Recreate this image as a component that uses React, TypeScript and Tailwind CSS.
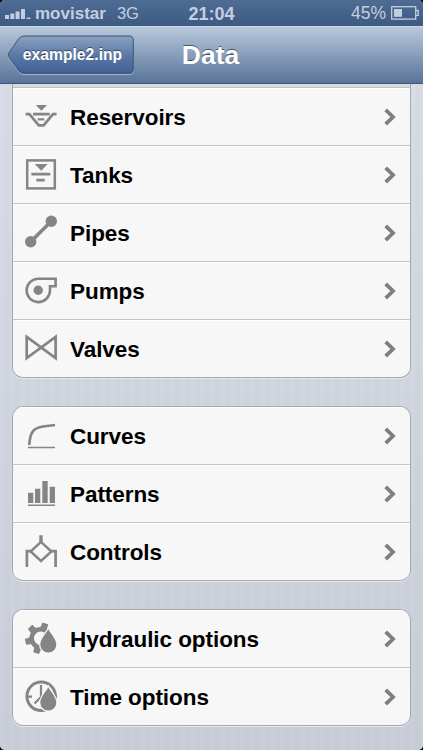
import type { ReactNode } from "react";

type Item = { label: string; icon: ReactNode };

const Icon = ({ children }: { children: ReactNode }) => (
  <svg
    width="32"
    height="32"
    viewBox="0 0 32 32"
    fill="none"
    stroke="#858585"
    strokeWidth="2.7"
    className="shrink-0 overflow-visible"
  >
    {children}
  </svg>
);

const Drop = () => (
  <path
    d="M23.3 6.3C25.6 10.6 31.3 16.2 31.3 21.6A8 8 0 0 1 15.3 21.6C15.3 16.2 21 10.6 23.3 6.3Z"
    fill="#858585"
    stroke="#f7f7f7"
    strokeWidth="2.6"
    paintOrder="stroke"
  />
);

const reservoirs = (
  <Icon>
    <path d="M10.7 4H22L16.4 9.8Z M8 11.8H24.7V14.6H8Z M12.7 17.2H19.3V19.4H12.7Z" fill="#858585" stroke="none" />
    <path d="M0.6 13.2H4.4L13.8 24.4H18.6L28 13.2H31.6" strokeWidth="2.7" />
  </Icon>
);

const tanks = (
  <Icon>
    <rect x="2.2" y="1.4" width="27.6" height="28" strokeWidth="2.5" />
    <path d="M9.7 5H22.7L16.2 11.7Z M6.3 13.7H25.3V16.6H6.3Z M11.3 19.7H19.7V22.6H11.3Z" fill="#858585" stroke="none" />
  </Icon>
);

const pipes = (
  <Icon>
    <path d="M5.7 24.7L26.3 4.3" strokeWidth="3.6" />
    <circle cx="5.7" cy="24.7" r="5.7" fill="#858585" stroke="none" />
    <circle cx="26.3" cy="4.3" r="5.7" fill="#858585" stroke="none" />
  </Icon>
);

const pumps = (
  <Icon>
    <path d="M13.3 3.7H30.6V11.3H25V15.5A11.7 11.7 0 1 1 13.3 3.7Z" strokeWidth="2.6" />
    <circle cx="13.2" cy="15.3" r="4.7" fill="#858585" stroke="none" />
  </Icon>
);

const valves = (
  <Icon>
    <path d="M1.7 3.8L30.6 25V3.8L1.7 25Z" strokeWidth="2.7" />
  </Icon>
);

const curves = (
  <Icon>
    <path d="M4.3 25C5 11 9 8 18 6.5L30 5" />
    <path d="M3 27.4H30" strokeWidth="1.5" />
  </Icon>
);

const patterns = (
  <Icon>
    <path
      d="M3 14.7H8.3V25H3Z M10 10.7H15.3V25H10Z M17.3 3H22.7V25H17.3Z M24.7 8.7H30V25H24.7Z M3 26.5H30V28H3Z"
      fill="#858585"
      stroke="none"
    />
  </Icon>
);

const controls = (
  <Icon>
    <path d="M16 -0.7V6" strokeWidth="3.4" />
    <path d="M16 5.8L26.4 15.5L16 25L5.6 15.5Z" strokeWidth="2.4" />
    <path d="M1.9 31V15.2H6 M30.6 31V15.2H26" />
  </Icon>
);

const hydraulic = (
  <Icon>
    <circle cx="15.7" cy="15.3" r="9" strokeWidth="4.6" />
    {[-73, -13, 47, 107, 167, 227].map((angle) => (
      <path
        key={angle}
        d="M9.5 -3.6L15.6 -3V3L9.5 3.6Z"
        transform={`translate(15.7 15.3) rotate(${angle})`}
        fill="#858585"
        stroke="none"
      />
    ))}
    <path d="M23.3 5L34 9V33H17L15 21Z" fill="#f7f7f7" stroke="none" />
    <Drop />
  </Icon>
);

const time = (
  <Icon>
    <circle cx="16.2" cy="15.3" r="14.3" strokeWidth="3" />
    <path d="M16 4V16L9.5 22.5 M3 15.6H7" strokeWidth="2.2" />
    <Drop />
  </Icon>
);

const groups: Item[][] = [
  [
    { label: "Reservoirs", icon: reservoirs },
    { label: "Tanks", icon: tanks },
    { label: "Pipes", icon: pipes },
    { label: "Pumps", icon: pumps },
    { label: "Valves", icon: valves },
  ],
  [
    { label: "Curves", icon: curves },
    { label: "Patterns", icon: patterns },
    { label: "Controls", icon: controls },
  ],
  [
    { label: "Hydraulic options", icon: hydraulic },
    { label: "Time options", icon: time },
  ],
];

const Row = ({ label, icon }: Item) => (
  <li className="flex h-[58px] items-center border-t border-b border-t-white border-b-[#c4c4c6] bg-[#f7f7f7] pr-[14px] pl-3 last:h-[57px] last:border-b-0">
    {icon}
    <span className="ml-[13px] flex-1 pt-px text-[22.5px] leading-7 font-bold tracking-[-0.06px] text-black">
      {label}
    </span>
    <svg width="12" height="18" viewBox="0 0 12 18" fill="none" stroke="#7f7f7f" strokeWidth="3.8">
      <path d="M1.7 1.8L9 9L1.7 16.2" />
    </svg>
  </li>
);

const StatusBar = () => (
  <div className="grid h-[26px] grid-cols-3 items-center bg-linear-to-b from-[#4f6d94] to-[#3c5a82] pt-px text-[18px] leading-none text-[#c3cfdf]">
    <div className="flex items-center pl-[5px]">
      <svg width="26" height="12" viewBox="0 0 26 12" fill="#c3cfdf" className="shrink-0">
        <path d="M0 7H4V11H0Z M5.3 5.5H9.3V11H5.3Z M10.6 3.5H14.6V11H10.6Z M16 1H20V11H16Z M21.6 9.5H25.4V11H21.6Z" />
      </svg>
      <span className="ml-[4px] text-[17px] font-bold">movistar</span>
      <span className="ml-[11px] text-[16.5px]">3G</span>
    </div>
    <div className="text-center font-bold">21:04</div>
    <div className="flex items-center justify-end pr-[4px]">
      <span className="text-[17.5px]">45%</span>
      <svg width="28" height="14" viewBox="0 0 28 14" className="mb-px ml-[5px]" fill="none" stroke="#c3cfdf" strokeWidth="1.3">
        <rect x="0.7" y="0.7" width="24" height="12.4" />
        <path d="M25 4.5H27.2V9.3H25" />
        <rect x="3" y="3" width="8" height="7.8" fill="#c3cfdf" stroke="none" />
      </svg>
    </div>
  </div>
);

const NavBar = () => (
  <header className="relative flex h-[58px] items-center justify-center border-t border-b border-t-[#cfdbe9] border-b-[#3f5878] bg-linear-to-b from-[#b9c9dc] to-[#587498] pr-[2px]">
    <button className="absolute top-[8px] left-[7px] h-[40px] w-[128px]">
      <svg width="128" height="40" viewBox="0 0 128 40" className="absolute inset-0">
        <defs>
          <linearGradient id="back" x1="0" y1="0" x2="0" y2="1">
            <stop offset="0" stopColor="#8ba1c0" />
            <stop offset="0.5" stopColor="#5d7aa6" />
            <stop offset="1" stopColor="#3f6094" />
          </linearGradient>
        </defs>
        <path
          d="M17 1.8H122Q126.5 1.8 126.5 6.3V35Q126.5 39.5 122 39.5H17Q14 39.5 12 37L2 23Q0.5 20.7 2 18.4L12 4.2Q14 1.8 17 1.8Z"
          fill="none"
          stroke="#a3b4cb"
        />
        <path
          d="M17 1H122Q126.3 1 126.3 5.3V34Q126.3 38.3 122 38.3H17Q14 38.3 12 36L2 22Q0.5 20 2 17.8L12 3.4Q14 1 17 1Z"
          fill="url(#back)"
          stroke="#3b5275"
        />
      </svg>
      <span className="relative block pl-[3px] text-center text-[15.7px] leading-[40px] font-bold text-white text-shadow-[0_-1px_0_rgb(0_0_0/0.45)]">
        example2.inp
      </span>
    </button>
    <h1 className="text-[26.5px] leading-none font-bold text-white text-shadow-[0_-1px_0_rgb(0_0_0/0.5)]">Data</h1>
  </header>
);

const App = () => {
  return (
    <div className="h-[750px] w-[423px] overflow-hidden bg-black font-['Liberation_Sans',Arial,sans-serif]">
      <div className="flex h-full flex-col overflow-hidden rounded-[5px] bg-[#cfd4e0]">
        <StatusBar />
        <NavBar />
        <main className="flex flex-1 flex-col gap-[28px] bg-[repeating-linear-gradient(90deg,rgb(255_255_255/0.06)_0_5px,transparent_5px_10px),linear-gradient(#d5dae5,#c7cbd6)] px-[12px]">
          {groups.map((items, index) => (
            <ul
              key={index}
              className="overflow-hidden rounded-[11px] border border-[#a5a8af] shadow-[0_1px_0_#e6e9ef] first:rounded-t-none first:border-t-0"
            >
              {/* bottom edge of the row scrolled under the nav bar */}
              {index === 0 && <li className="h-[4px] border-b border-b-[#c4c4c6] bg-[#dadae0]" />}
              {items.map((item) => (
                <Row key={item.label} {...item} />
              ))}
            </ul>
          ))}
        </main>
      </div>
    </div>
  );
};

export default App;
